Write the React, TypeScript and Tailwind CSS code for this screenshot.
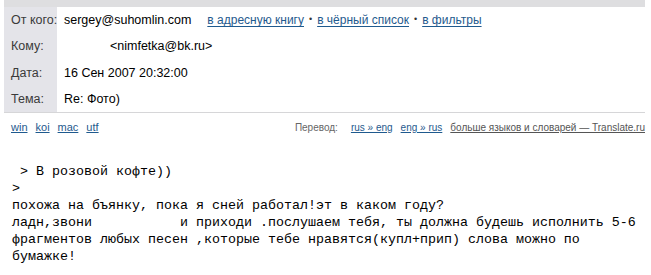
import React from "react";

const body = ` > В розовой кофте))
>
похожа на бъянку, пока я сней работал!эт в каком году?
ладн,звони           и приходи .послушаем тебя, ты должна будешь исполнить 5-6
фрагментов любых песен ,которые тебе нравятся(купл+прип) слова можно по
бумажке!`;

function Row({ label, children, h }: { label: string; children: React.ReactNode; h: string }) {
  return (
    <div className={`flex ${h}`}>
      <div className="w-[53px] shrink-0 bg-[#e4e4e9] pl-[7px] flex items-center whitespace-nowrap text-[#3a3a3a]">{label}</div>
      <div className="flex-1 pl-[7px] flex items-center whitespace-nowrap text-black">{children}</div>
    </div>
  );
}

export default function App() {
  return (
    <div className="w-[651px] h-[275px] bg-white overflow-hidden" style={{ fontFamily: '"Liberation Sans", Arial, sans-serif' }}>
      <div className="ml-[4px] w-[641px]">
        <div className="h-[7px] bg-[#dedee0]" />
        <div className="text-[12.5px]">
          <Row label="От кого:" h="h-[26px]">
            <span>sergey@suhomlin.com</span>
            <span className="ml-[16px] text-[12px] text-[#1f5a8e] underline underline-offset-2">в адресную книгу</span>
            <span className="mx-[5px] text-[9px] text-[#333]">•</span>
            <span className="text-[12px] text-[#1f5a8e] underline underline-offset-2">в чёрный список</span>
            <span className="mx-[5px] text-[9px] text-[#333]">•</span>
            <span className="text-[12px] text-[#1f5a8e] underline underline-offset-2">в фильтры</span>
          </Row>
          <Row label="Кому:" h="h-[27px]">
            <span className="ml-[46px]">&lt;nimfetka@bk.ru&gt;</span>
          </Row>
          <Row label="Дата:" h="h-[26px]">
            <span>16 Сен 2007 20:32:00</span>
          </Row>
          <Row label="Тема:" h="h-[26px]">
            <span>Re: Фото)</span>
          </Row>
        </div>
        <div className="h-px bg-[#d6d6d8]" />
        <div className="h-[28px] flex items-center justify-between pl-[7px]" style={{ fontFamily: '"Liberation Sans", Arial, sans-serif' }}>
          <div className="flex gap-[8px] text-[11px] text-[#1f5a8e]">
            <span className="underline">win</span>
            <span className="underline">koi</span>
            <span className="underline">mac</span>
            <span className="underline">utf</span>
          </div>
          <div className="flex items-center gap-[8px] text-[10px]">
            <span className="text-[#666] mr-[5px]">Перевод:</span>
            <span className="text-[#1f5a8e] underline">rus » eng</span>
            <span className="text-[#1f5a8e] underline">eng » rus</span>
            <span className="text-[#555] underline">больше языков и словарей — Translate.ru</span>
          </div>
        </div>
      </div>
      <pre className="mt-[22px] pl-[12px] text-[13.33px] leading-[17px] text-black" style={{ fontFamily: '"Liberation Mono", "Courier New", monospace' }}>{body}</pre>
    </div>
  );
}
